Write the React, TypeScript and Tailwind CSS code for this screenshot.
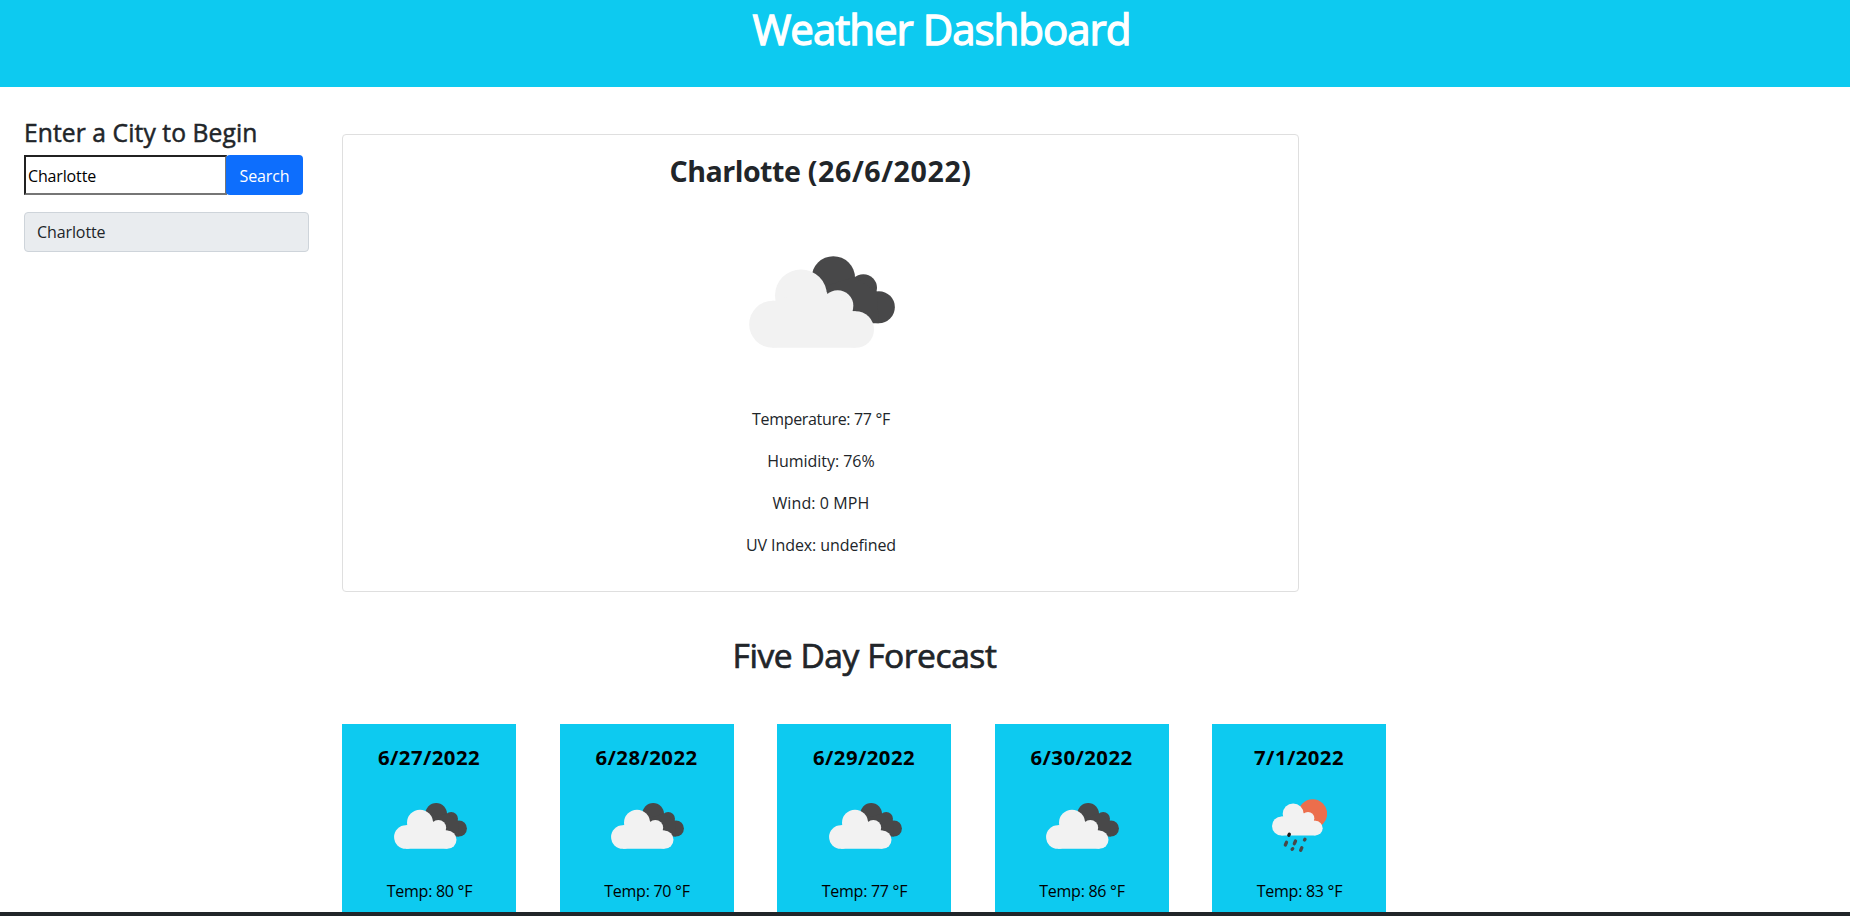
type IconKind = "cloudy" | "showers";

interface ForecastDay {
  date: string;
  temp: number;
  icon: IconKind;
}

const forecast: ForecastDay[] = [
  { date: "6/27/2022", temp: 80, icon: "cloudy" },
  { date: "6/28/2022", temp: 70, icon: "cloudy" },
  { date: "6/29/2022", temp: 77, icon: "cloudy" },
  { date: "6/30/2022", temp: 86, icon: "cloudy" },
  { date: "7/1/2022", temp: 83, icon: "showers" },
];

const conditions = [
  { text: "Temperature: 77 °F", tracking: "tracking-[-0.33px]" },
  { text: "Humidity: 76%", tracking: "tracking-[-0.04px]" },
  { text: "Wind: 0 MPH", tracking: "tracking-[0.1px]" },
  { text: "UV Index: undefined", tracking: "tracking-[-0.08px]" },
];

function CloudyIcon({ className }: { className?: string }) {
  return (
    <svg viewBox="326 392 438 275" className={className} aria-hidden="true">
      <g fill="#484849">
        <circle cx="579" cy="457" r="65" />
        <circle cx="669" cy="487" r="41" />
        <circle cx="715.5" cy="545" r="48" />
        <path d="M560 480 L643 455 L710 499 L715 593 H640 L560 520 Z" />
      </g>
      <g fill="#f2f2f2">
        <circle cx="397" cy="596.5" r="70.5" />
        <circle cx="482" cy="510" r="78" />
        <circle cx="592" cy="541" r="47" />
        <circle cx="646" cy="612" r="55" />
        <path d="M397 667 V526 H405 L482 500 H560 L561 505 L600 520 L638 557 H646 V667 Z" />
      </g>
    </svg>
  );
}

function ShowersIcon({ className }: { className?: string }) {
  return (
    <svg viewBox="276 297 165 160" className={className} aria-hidden="true">
      <circle cx="398" cy="341" r="43.5" fill="#ec6e4c" />
      <g fill="#f2f2f2">
        <circle cx="304.500" cy="378" r="28.500" />
        <circle cx="339.500" cy="342" r="31.500" />
        <circle cx="384" cy="355" r="19" />
        <circle cx="406" cy="384.500" r="22" />
        <path d="M304.500 406.500 V349.500 H309 L340 340 H371 L385 345 L402 362.500 H406 V406.500 Z" />
      </g>
      <g stroke="#484849" strokeWidth="10" strokeLinecap="round">
        <path d="M326.500 406 L328 403" stroke="#1c1c1d" />
        <path d="M316 435 L319.500 427" />
        <path d="M343 431 L346.500 423" />
        <path d="M373.500 420 L375 418" />
        <path d="M336.500 448 L338 446" />
        <path d="M362 451 L365.500 443" />
      </g>
    </svg>
  );
}

function ForecastCard({ day }: { day: ForecastDay }) {
  return (
    <div className="flex w-[174px] flex-col items-center bg-[#0dcaf0] pt-[21px] text-black">
      <h3 className="text-[20.3px] leading-6 font-bold tracking-[0.45px] whitespace-nowrap">{day.date}</h3>
      <div className="mt-[7px] flex h-[100px] items-center justify-center">
        {day.icon === "cloudy" ? (
          <CloudyIcon className="ml-0.5 w-[73px]" />
        ) : (
          <ShowersIcon className="ml-px w-[55px]" />
        )}
      </div>
      <p className="mt-[3px] ml-px leading-6 tracking-[-0.27px]">Temp: {day.temp} °F</p>
    </div>
  );
}

export default function App() {
  return (
    <div className="flex h-[916px] w-[1850px] flex-col overflow-hidden bg-white font-['Open_Sans','Noto_Sans',sans-serif] text-base text-[#212529]">
      <header className="h-[87px] shrink-0 bg-[#0dcaf0] pt-1 pl-[33px] text-center">
        <h1 className="text-[42px] leading-[50px] font-normal tracking-[-1px] text-white [-webkit-text-stroke:1.3px_white]">
          Weather Dashboard
        </h1>
      </header>

      <main className="flex min-h-0 flex-1 overflow-hidden">
        <aside className="w-[342px] shrink-0 pt-[31px] pl-6">
          <h2 className="text-[24.6px] leading-[30px] font-normal tracking-[0.1px] whitespace-nowrap [-webkit-text-stroke:0.5px_#212529]">
            Enter a City to Begin
          </h2>
          <div className="mt-[7px] flex h-10">
            <input
              type="text"
              defaultValue="Charlotte"
              className="-mr-px w-[203px] border-2 border-t-[#212121] border-r-[#767676] border-b-[#767676] border-l-[#212121] bg-white px-0.5 pt-0.5 tracking-[-0.15px] text-black outline-none"
            />
            <button type="button" className="w-[77px] rounded bg-[#0d6efd] pt-px tracking-[-0.1px] text-white">
              Search
            </button>
          </div>
          <div className="mt-[17px] flex h-10 w-[285px] items-center rounded border border-[#ced4da] bg-[#e9ecef] px-3 tracking-[-0.1px]">
            Charlotte
          </div>
        </aside>

        <div className="w-[1047px] shrink-0 pt-[47px]">
          <section className="flex h-[458px] w-[957px] flex-col items-center rounded border border-[#dfdfdf] pt-[19px]">
            <h2 className="text-[28.6px] leading-[34px] font-bold">
              <span className="tracking-[-0.5px]">Charlotte</span>{" "}
              <span className="tracking-[0.58px]">(26/6/2022)</span>
            </h2>
            <CloudyIcon className="mt-[68px] ml-0.5 h-[92px] w-[146px]" />
            <div className="mt-[59px] ml-px flex flex-col items-center gap-[18px] leading-6">
              {conditions.map((line) => (
                <p key={line.text} className={line.tracking}>
                  {line.text}
                </p>
              ))}
            </div>
          </section>

          <h2 className="mt-[43px] pr-0.5 text-center text-[33.6px] leading-10 font-normal tracking-[-0.45px] [-webkit-text-stroke:0.7px_#212529]">
            Five Day Forecast
          </h2>

          <div className="mt-[49px] flex h-[230px] w-[1044px] justify-between">
            {forecast.map((day) => (
              <ForecastCard key={day.date} day={day} />
            ))}
          </div>
        </div>
      </main>

      <footer className="h-1 shrink-0 bg-[#212529]" />
    </div>
  );
}
